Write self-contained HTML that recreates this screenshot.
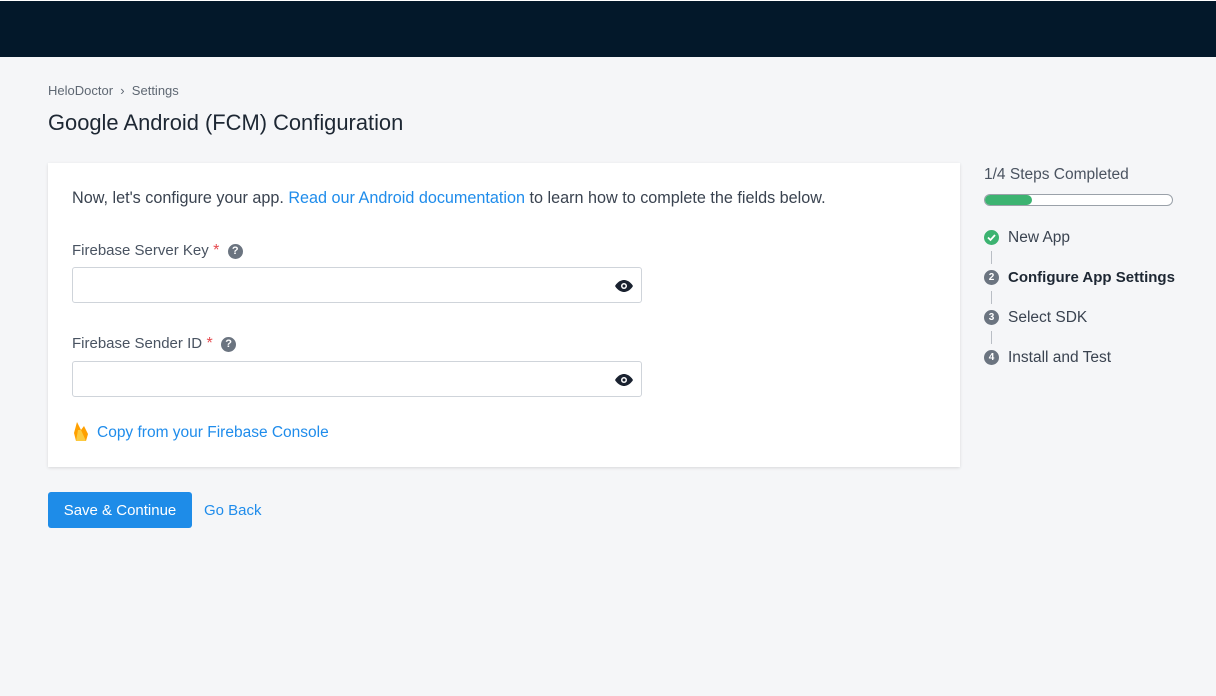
<!DOCTYPE html>
<html><head><meta charset="utf-8"><style>
*{margin:0;padding:0;box-sizing:border-box}
body{width:1216px;height:696px;background:#f5f6f8;font-family:"Liberation Sans",sans-serif;position:relative;overflow:hidden;color:#2b3440}
.a{position:absolute;white-space:nowrap}
.top{left:0;top:0;width:1216px;height:57px;background:#03182a;border-top:1px solid #fff}
.card{left:48px;top:163px;width:912px;height:304px;background:#fff;box-shadow:0 1px 3px rgba(0,0,0,.12)}
.lbl{font-size:15px;color:#495361}
.req{color:#e5484d;font-size:16px}
.q{display:inline-block;width:15px;height:15px;border-radius:50%;background:#6b7480;color:#fff;font-size:11px;font-weight:bold;text-align:center;line-height:15px;vertical-align:1px}
.inp{left:72px;width:570px;height:36px;border:1px solid #cfd4da;border-radius:3px;background:#fff}
.eye{position:absolute;right:7px;top:10px}
.link{color:#1f8ceb}
.num{display:inline-block;width:15px;height:15px;border-radius:50%;background:#6b7480;color:#fff;font-size:10px;font-weight:bold;text-align:center;line-height:15px}
.step{font-size:15.5px;color:#3a4350}
.vl{width:1px;height:13px;background:#b9bec5}
</style></head><body>
<div class="a top"></div>
<div class="a" style="left:48px;top:83px;font-size:13px;color:#5f6873">HeloDoctor &nbsp;›&nbsp; Settings</div>
<div class="a" style="left:48px;top:110px;font-size:21.9px;color:#1d2733">Google Android (FCM) Configuration</div>
<div class="a card"></div>
<div class="a" style="left:72px;top:189px;font-size:16.2px;color:#3a4350">Now, let's configure your app. <span class="link">Read our Android documentation</span> to learn how to complete the fields below.</div>
<div class="a lbl" style="left:72px;top:242px">Firebase Server Key<span class="req"> *</span>&nbsp;&nbsp;<span class="q">?</span></div>
<div class="a inp" style="top:267px"><svg class="eye" width="20" height="16" viewBox="0 0 20 16"><path d="M1 8C4 3 8 2 10 2s6 1 9 6c-3 5-7 6-9 6S4 13 1 8z" fill="#1a2230"/><circle cx="10" cy="8" r="3" fill="#fff"/><circle cx="10" cy="8" r="1.5" fill="#1a2230"/></svg></div>
<div class="a lbl" style="left:72px;top:335px">Firebase Sender ID<span class="req"> *</span>&nbsp;&nbsp;<span class="q">?</span></div>
<div class="a inp" style="top:361px"><svg class="eye" width="20" height="16" viewBox="0 0 20 16"><path d="M1 8C4 3 8 2 10 2s6 1 9 6c-3 5-7 6-9 6S4 13 1 8z" fill="#1a2230"/><circle cx="10" cy="8" r="3" fill="#fff"/><circle cx="10" cy="8" r="1.5" fill="#1a2230"/></svg></div>
<svg class="a" style="left:73px;top:421px" width="16" height="21" viewBox="0 0 16 21"><path d="M3 20L1 12 4 1 8 9 11 5 15 13 13 20z" fill="#ffa000"/><path d="M3 20L5 9 8 9 13 20z" fill="#fcca3f"/></svg>
<div class="a link" style="left:97px;top:424px;font-size:15.5px">Copy from your Firebase Console</div>
<div class="a" style="left:48px;top:492px;width:144px;height:36px;background:#1e8ce8;border-radius:3px;color:#fff;font-size:15px;text-align:center;line-height:38px">Save &amp; Continue</div>
<div class="a link" style="left:204px;top:502px;font-size:15px">Go Back</div>

<div class="a" style="left:984px;top:166px;font-size:15.5px;color:#4a5360">1/4 Steps Completed</div>
<div class="a" style="left:984px;top:194px;width:189px;height:12px;border:1px solid #9aa1a9;border-radius:6px;background:#fff"><div style="width:47px;height:10px;background:#3cb371;border-radius:5px"></div></div>
<div class="a" style="left:984px;top:230px;width:15px;height:15px;border-radius:50%;background:#3cb371"><svg width="15" height="15" viewBox="0 0 15 15"><path d="M4 7.5l2.5 2.5 4.5-5" stroke="#fff" stroke-width="1.8" fill="none"/></svg></div>
<div class="a step" style="left:1008px;top:229px">New App</div>
<div class="a vl" style="left:991px;top:251px"></div>
<div class="a num" style="left:984px;top:270px">2</div>
<div class="a step" style="left:1008px;top:269px;font-weight:bold;color:#1d2733;font-size:15px">Configure App Settings</div>
<div class="a vl" style="left:991px;top:291px"></div>
<div class="a num" style="left:984px;top:310px">3</div>
<div class="a step" style="left:1008px;top:309px">Select SDK</div>
<div class="a vl" style="left:991px;top:331px"></div>
<div class="a num" style="left:984px;top:350px">4</div>
<div class="a step" style="left:1008px;top:349px">Install and Test</div>
</body></html>
